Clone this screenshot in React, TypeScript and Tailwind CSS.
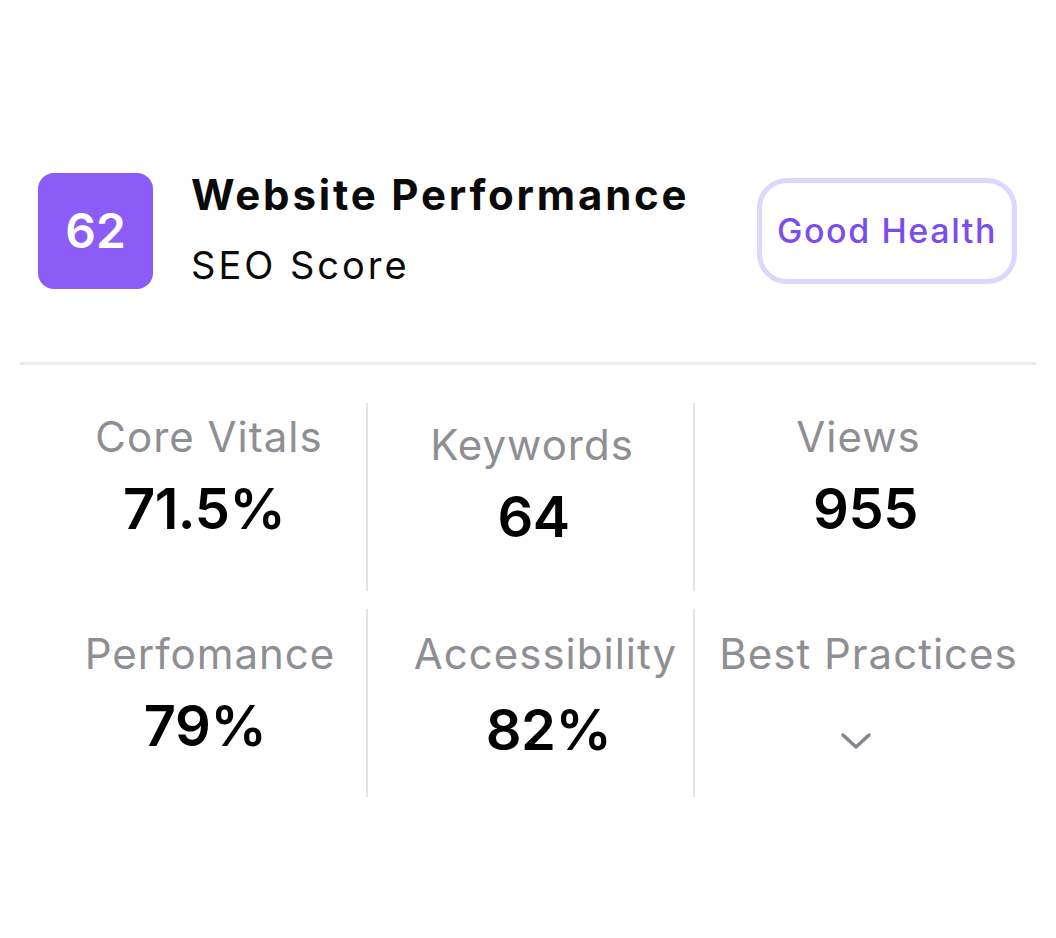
type Stat = {
  label: string;
  value?: string;
  cell?: string;
  labelPad?: string;
  valuePad?: string;
  valueGap?: string;
};

const TOP_ROW: Stat[] = [
  { label: "Core Vitals", value: "71.5%", labelPad: "pl-[14px]", valuePad: "pl-[4px]" },
  { label: "Keywords", value: "64", cell: "pt-[21px]", labelPad: "pl-[3px]", valuePad: "pl-[6px]" },
  { label: "Views", value: "955", labelPad: "pr-[14px]" },
];

const BOTTOM_ROW: Stat[] = [
  { label: "Perfomance", value: "79%", labelPad: "pl-[16px]", valuePad: "pl-[6px]" },
  {
    label: "Accessibility",
    value: "82%",
    labelPad: "pl-[30px]",
    valuePad: "pl-[36px]",
    valueGap: "mt-[27px]",
  },
  { label: "Best Practices", labelPad: "pl-[6px]" },
];

function Chevron() {
  return (
    <svg
      width="32"
      height="18"
      viewBox="0 0 32 18"
      fill="none"
      stroke="currentColor"
      strokeWidth="3.5"
      strokeLinecap="round"
      strokeLinejoin="round"
      className="mt-[57px] mr-[19px] text-[#85858b]"
    >
      <path d="M3 3 16 15 29 3" />
    </svg>
  );
}

function StatCell({ stat, first, top }: { stat: Stat; first: boolean; top: boolean }) {
  const pad = stat.cell ?? (top ? "pt-[13px]" : "pt-[24px]");
  return (
    <div
      className={`flex h-[188px] flex-col items-center ${pad} ${
        first ? "" : "border-l-2 border-[#e4e4e7]"
      }`}
    >
      <div
        className={`whitespace-nowrap text-[42px] leading-[42px] tracking-[1px] text-[#8e8e93] ${
          stat.labelPad ?? ""
        }`}
      >
        {stat.label}
      </div>
      {stat.value ? (
        <div
          className={`${stat.valueGap ?? "mt-[23px]"} text-[56px] font-semibold leading-[56px] tracking-[-0.5px] text-black ${
            stat.valuePad ?? ""
          }`}
        >
          {stat.value}
        </div>
      ) : (
        <Chevron />
      )}
    </div>
  );
}

export default function App() {
  return (
    <div className="min-h-screen bg-white font-['Inter',sans-serif]">
      <div className="px-[20px] pt-[172px]">
        <div className="flex items-center justify-between pl-[18px] pr-[19px]">
          <div className="flex items-center gap-[38px]">
            <div className="flex h-[116px] w-[115px] items-center justify-center rounded-[16px] bg-[#8b5cf6] text-[48px] font-semibold text-white">
              62
            </div>
            <div className="flex flex-col pb-[4px]">
              <div className="text-[42px] font-bold leading-[46px] tracking-[2.8px] text-[#0a0a0a]">
                Website Performance
              </div>
              <div className="mt-[27px] text-[38px] leading-[40px] tracking-[3px] text-[#0a0a0a]">
                SEO Score
              </div>
            </div>
          </div>
          <div className="flex h-[106px] w-[260px] items-center justify-center rounded-[30px] border-[5px] border-[#ddd6fe] text-[34px] font-medium tracking-[1.6px] text-[#7c4ded]">
            Good Health
          </div>
        </div>

        <div className="mt-[73px] h-[3px] bg-[#ececee]" />

        <div className="mt-[38px] grid grid-cols-[328px_327px_1fr] gap-y-[18px] pl-[18px]">
          {TOP_ROW.map((stat, i) => (
            <StatCell key={stat.label} stat={stat} first={i === 0} top />
          ))}
          {BOTTOM_ROW.map((stat, i) => (
            <StatCell key={stat.label} stat={stat} first={i === 0} top={false} />
          ))}
        </div>
      </div>
    </div>
  );
}
